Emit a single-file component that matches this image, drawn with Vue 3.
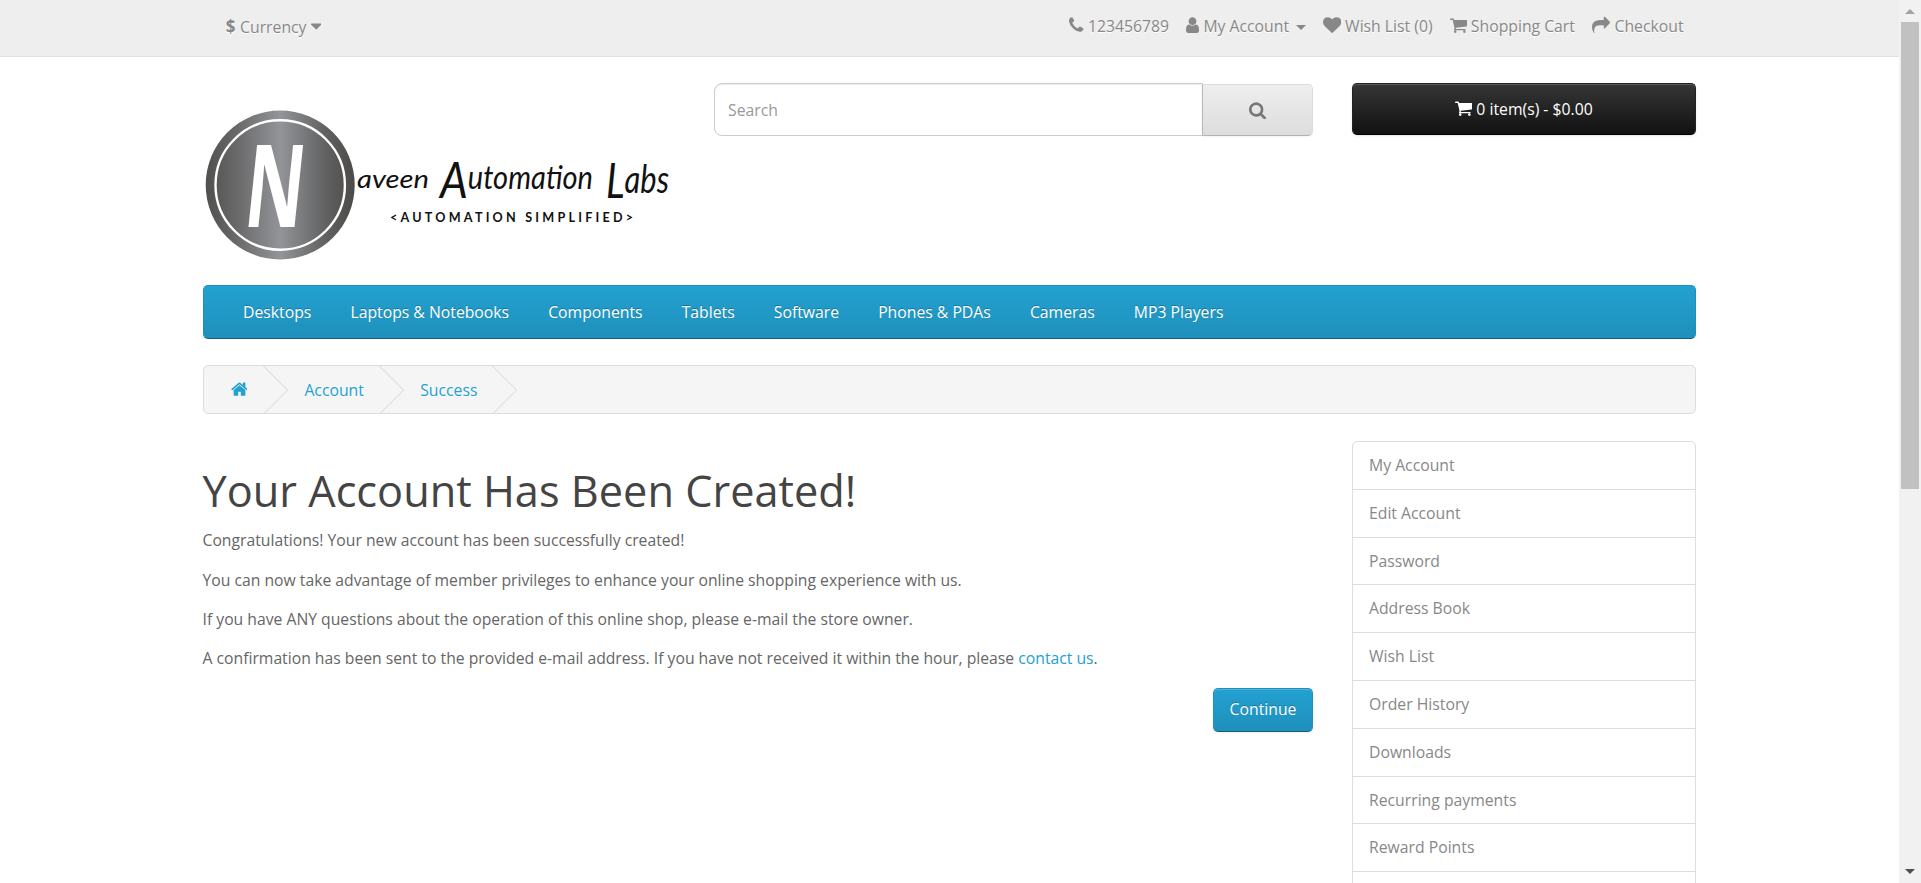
<script setup>
import { h } from 'vue'

const glyphs = {
  phone: ['192 0 1408 1792', 'M1600 1240q0 27-10 70.5t-21 68.5q-21 50-122 106-94 51-186 51-27 0-53-3.5t-57.5-12.5-47-14.5-55.5-20.5-49-18q-98-35-175-83-127-79-264-216t-216-264q-48-77-83-175-3-9-18-49t-20.5-55.5-14.5-47-12.5-57.5-3.5-53q0-92 51-186 56-101 106-122 25-11 68.5-21t70.5-10q14 0 21 3 18 6 53 76 11 19 30 54t35 63.5 31 53.5q3 4 17.5 25t21.5 35.5 7 28.5q0 20-28.5 50t-62 55-62 53-28.5 46q0 9 5 22.5t8.5 20.5 14 24 11.5 19q76 137 174 235t235 174q2 1 19 11.5t24 14 20.5 8.5 22.5 5q18 0 46-28.5t53-62 55-62 50-28.5q14 0 28.5 7t35.5 21.5 25 17.5q25 15 53.5 31t63.5 35 54 30q70 35 76 53 3 7 3 21z'],
  user: ['256 0 1280 1792', 'M1536 1399q0 109-62.5 187t-150.5 78h-854q-88 0-150.5-78t-62.5-187q0-85 8.5-160.5t31.5-152 58.5-131 94-89 134.5-34.5q131 128 313 128t313-128q76 0 134.5 34.5t94 89 58.5 131 31.5 152 8.5 160.5zm-256-887q0 159-112.5 271.5t-271.5 112.5-271.5-112.5-112.5-271.5 112.5-271.5 271.5-112.5 271.5 112.5 112.5 271.5z'],
  heart: ['0 0 1792 1792', 'M896 1664q-26 0-44-18l-624-602q-10-8-27.5-26t-55.5-65.5-68-97.5-53.5-121-23.5-138q0-220 127-344t351-124q62 0 126.5 21.5t120 58 95.5 68.5 76 68q36-36 76-68t95.5-68.5 120-58 126.5-21.5q224 0 351 124t127 344q0 221-229 450l-623 600q-18 18-44 18z'],
  cart: ['64 0 1664 1792', 'M704 1536q0 52-38 90t-90 38-90-38-38-90 38-90 90-38 90 38 38 90zm896 0q0 52-38 90t-90 38-90-38-38-90 38-90 90-38 90 38 38 90zm128-1088v512q0 24-16.5 42.5t-40.5 21.5l-1044 122q13 60 13 70 0 16-24 64h920q26 0 45 19t19 45-19 45-45 19h-1024q-26 0-45-19t-19-45q0-11 8-31.5t16-36 21.5-40 15.5-29.5l-177-823h-204q-26 0-45-19t-19-45 19-45 45-19h256q16 0 28.5 6.5t19.5 15.5 13 24.5 8 26 5.5 29.5 4.5 26h1201q26 0 45 19t19 45z'],
  share: ['0 0 1792 1792', 'M1792 640q0 26-19 45l-512 512q-19 19-45 19t-45-19-19-45v-256h-224q-98 0-175.5 6t-154 21.5-133 42.5-105.5 69.5-80 101-48.5 138.5-17.5 181q0 55 5 123 0 6 2.5 23.5t2.5 26.5q0 15-8.5 25t-23.5 10q-16 0-28-17-7-9-13-22t-13.5-30-10.5-24q-127-285-127-451 0-199 53-333 162-403 875-403h224v-256q0-26 19-45t45-19 45 19l512 512q19 19 19 45z'],
  caret: ['384 0 1024 1792', 'M1408 704q0 26-19 45l-448 448q-19 19-45 19t-45-19l-448-448q-19-19-19-45t19-45 45-19h896q26 0 45 19t19 45z'],
  home: ['64 0 1664 1792', 'M1472 992v480q0 26-19 45t-45 19h-384v-384h-256v384h-384q-26 0-45-19t-19-45v-480q0-1 .5-3t.5-3l575-474 575 474q1 2 1 6zm223-69l-62 74q-8 9-21 11h-3q-13 0-21-7l-692-577-692 577q-12 8-24 7-13-2-21-11l-62-74q-8-10-7-23.5t11-21.5l719-599q32-26 76-26t76 26l244 204v-195q0-14 9-23t23-9h192q14 0 23 9t9 23v408l219 182q10 8 11 21.5t-7 23.5z'],
  search: ['64 0 1664 1792', 'M1216 832q0-185-131.5-316.5t-316.5-131.5-316.5 131.5-131.5 316.5 131.5 316.5 316.5 131.5 316.5-131.5 131.5-316.5zm512 832q0 52-38 90t-90 38q-54 0-90-38l-343-342q-179 124-399 124-143 0-273.5-55.5t-225-150-150-225-55.5-273.5 55.5-273.5 150-225 225-150 273.5-55.5 273.5 55.5 225 150 150 225 55.5 273.5q0 220-124 399l343 343q37 37 37 90z']
}

const Icon = (props) => {
  const [box, d] = glyphs[props.name]
  return h('svg', { viewBox: box, class: 'icon', 'aria-hidden': 'true' }, [h('path', { d, fill: 'currentColor' })])
}
Icon.props = ['name']

const topLinks = [
  { icon: 'phone', text: '123456789' },
  { icon: 'user', text: 'My Account', caret: true },
  { icon: 'heart', text: 'Wish List (0)' },
  { icon: 'cart', text: 'Shopping Cart' },
  { icon: 'share', text: 'Checkout' }
]
const menu = ['Desktops', 'Laptops & Notebooks', 'Components', 'Tablets', 'Software', 'Phones & PDAs', 'Cameras', 'MP3 Players']
const crumbs = ['Account', 'Success']
const sideLinks = ['My Account', 'Edit Account', 'Password', 'Address Book', 'Wish List', 'Order History', 'Downloads', 'Recurring payments', 'Reward Points']
</script>

<template>
  <div class="window">
    <div class="page">
      <nav class="top">
        <div class="container top-row">
          <div class="currency"><strong>$</strong> Currency <Icon name="caret" /></div>
          <ul class="top-links">
            <li v-for="l in topLinks" :key="l.text">
              <Icon :name="l.icon" /><span class="label">{{ l.text }}</span><i v-if="l.caret" class="caret"></i>
            </li>
          </ul>
        </div>
      </nav>

      <header class="container header">
        <svg class="logo" width="477" height="160" viewBox="0 0 477 160">
          <defs>
            <linearGradient id="steel">
              <stop offset="0" stop-color="#50504f" />
              <stop offset="0.2" stop-color="#686868" />
              <stop offset="0.5" stop-color="#929498" />
              <stop offset="0.8" stop-color="#626262" />
              <stop offset="1" stop-color="#4b4a48" />
            </linearGradient>
          </defs>
          <circle cx="77.2" cy="81" r="74.5" fill="url(#steel)" />
          <circle cx="77.2" cy="81" r="64.7" fill="none" stroke="#fff" stroke-width="2.4" />
          <text class="initial" transform="translate(39 123) skewX(-6)" textLength="59" lengthAdjust="spacingAndGlyphs">N</text>
          <g class="script">
            <text x="154" y="84" font-size="25" textLength="72" lengthAdjust="spacingAndGlyphs">aveen</text>
            <text x="237" y="94" textLength="153" lengthAdjust="spacingAndGlyphs"><tspan font-size="50">A</tspan><tspan dy="-9" font-size="33">utomation</tspan></text>
            <text x="403" y="94" textLength="63" lengthAdjust="spacingAndGlyphs"><tspan font-size="48">L</tspan><tspan dy="-5" font-size="38">abs</tspan></text>
          </g>
          <text class="tagline" x="187" y="118" textLength="243">&lt;AUTOMATION SIMPLIFIED&gt;</text>
        </svg>
        <div class="search">
          <input type="text" placeholder="Search" />
          <button class="search-btn"><Icon name="search" /></button>
        </div>
        <button class="cart"><Icon name="cart" /> 0 item(s) - $0.00</button>
      </header>

      <nav class="container menu">
        <a v-for="m in menu" :key="m">{{ m }}</a>
      </nav>

      <ul class="container crumbs">
        <li class="home"><Icon name="home" /></li>
        <li v-for="c in crumbs" :key="c">{{ c }}</li>
      </ul>

      <div class="container body">
        <main>
          <h1>Your Account Has Been Created!</h1>
          <p class="lead">Congratulations! Your new account has been successfully created!</p>
          <p>You can now take advantage of member privileges to enhance your online shopping experience with us.</p>
          <p>If you have ANY questions about the operation of this online shop, please e-mail the store owner.</p>
          <p>A confirmation has been sent to the provided e-mail address. If you have not received it within the hour, please <a>contact us</a>.</p>
          <div class="actions"><button class="primary">Continue</button></div>
        </main>
        <aside>
          <a v-for="s in sideLinks" :key="s">{{ s }}</a>
        </aside>
      </div>
    </div>
    <div class="scrollbar">
      <svg width="10" height="5" viewBox="0 0 10 5"><path d="M0 5L5 0l5 5z" fill="#a3a3a3" /></svg>
      <div class="thumb"></div>
      <svg class="down" width="10" height="5" viewBox="0 0 10 5"><path d="M0 0l5 5 5-5z" fill="#505050" /></svg>
    </div>
  </div>
</template>

<style>
html, body { margin: 0; overflow: hidden; background: #fff; }
</style>

<style scoped>
* { box-sizing: border-box; }
.window { display: flex; height: 883px; overflow: hidden; font: 400 15.75px/22.5px "Open Sans", sans-serif; color: #666; }
.page { flex: 1; min-width: 0; overflow: hidden; }
.container { width: 1494px; margin-left: 202.5px; width: 1493.5px; }
ul { list-style: none; padding: 0; margin: 0; }
button, input { font: inherit; margin: 0; }
:deep(.icon) { height: 18.3px; width: auto; vertical-align: -2.6px; }

.top { height: 57px; background: #eee; border-bottom: 1px solid #e2e2e2; color: #888; text-shadow: 0 1px 0 #fff; }
.top-row { display: flex; justify-content: space-between; padding: 15px 12.5px 0 23.2px; }
.currency { padding-top: 1px; white-space: nowrap; }
.currency strong { font-weight: 700; font-size: 17px; margin-right: .6px; }
.top-links { display: flex; gap: 17px; white-space: nowrap; }
.label { margin-left: 4.3px; }
.caret { display: inline-block; margin-left: 6.5px; vertical-align: 2px; border: 5px solid transparent; border-top-color: currentColor; border-bottom: 0; }

.header { display: flex; align-items: flex-start; height: 228px; padding-top: 26px; }
.logo { margin: 21px 34.5px 0 0; display: block; flex: none; }
.initial { font: 700 115px "Open Sans", sans-serif; fill: #fff; }
.script { font: italic 400 30px Lato, sans-serif; fill: #111; }
.tagline { font: 700 12.6px Lato, sans-serif; fill: #111; }
.search { display: flex; width: 599px; height: 53px; }
.search input { width: 489px; height: 53px; border: 1px solid #ccc; border-radius: 8px 0 0 8px; padding: 0 13px; color: #555; background: #fff; box-shadow: inset 0 1px 1px rgba(0, 0, 0, .075); outline: 0; }
.search input::placeholder { color: #999; opacity: 1; }
.search-btn { width: 111px; height: 52px; margin: 1px 0 0 -1px; border: 1px solid #ddd; border-color: #ddd #ddd #b3b3b3 #b7b7b7; border-radius: 0 5px 5px 0; background: linear-gradient(#eee, #ddd); color: #777; box-shadow: 0 1px 2px rgba(0, 0, 0, .05); padding: 2px 0 0; }
.cart { width: 344px; height: 52px; margin-left: auto; color: #fff; border: 1px solid #111; border-color: #222 #222 #000; border-radius: 5px; background: linear-gradient(#363636, #111); box-shadow: inset 0 1px 0 rgba(255, 255, 255, .18), 0 1px 2px rgba(0, 0, 0, .1); padding: 0; }

.menu { display: flex; height: 54px; padding: 0 20px; background: linear-gradient(#23a1d1, #1f90bb); border: 1px solid #1f90bb; border-bottom-color: #145e7a; border-radius: 5px; color: #fff; text-shadow: 0 -1px 0 rgba(0, 0, 0, .25); white-space: nowrap; }
.menu a { padding: 15px 19.55px; }

.crumbs { display: flex; height: 49px; margin-top: 26px; border: 1px solid #ddd; border-radius: 5px; background: #f5f5f5; color: #23a1d1; text-shadow: 0 1px 0 #fff; overflow: hidden; }
.crumbs li { position: relative; padding: 13px 25.9px 0 30.5px; white-space: nowrap; }
.crumbs li.home { padding: 13px 26.4px 0 27px; }
.crumbs li::after { content: ""; position: absolute; top: 6.4px; right: -6.6px; width: 34.5px; height: 34.5px; border: 1px solid #ddd; border-left: 0; border-bottom: 0; transform: rotate(45deg); }

.body { display: flex; justify-content: space-between; margin-top: 27px; }
main { width: 1110.5px; }
h1 { margin: 26px 0 14px; font-weight: 400; font-size: 43.3px; line-height: 48px; color: #444; white-space: nowrap; }
p { margin: 0 0 16.6px; line-height: 22.5px; font-size: 15.72px; }
p.lead { margin-bottom: 17.4px; }
p a { color: #23a1d1; }
.actions { display: flex; justify-content: flex-end; margin-top: 18px; }
.primary { width: 100px; height: 44px; padding: 0; color: #fff; text-shadow: 0 -1px 0 rgba(0, 0, 0, .25); border: 1px solid #1f90bb; border-bottom-color: #145e7a; border-radius: 5px; background: linear-gradient(#23a1d1, #1f90bb); box-shadow: inset 0 1px 0 rgba(255, 255, 255, .2), 0 1px 2px rgba(0, 0, 0, .05); }
aside { width: 344px; height: 520px; border: 1px solid #ddd; border-radius: 5px; overflow: hidden; color: #888; }
aside a { display: block; height: 47.8px; padding: 12px 16px; border-bottom: 1px solid #ddd; }

.scrollbar { width: 22px; flex: none; background: #f1f1f1; display: flex; flex-direction: column; align-items: center; padding: 9px 0; }
.scrollbar svg { display: block; flex: none; }
.thumb { width: 18px; height: 467px; margin-top: 8px; background: #c1c1c1; }
.down { margin-top: auto; }
</style>
